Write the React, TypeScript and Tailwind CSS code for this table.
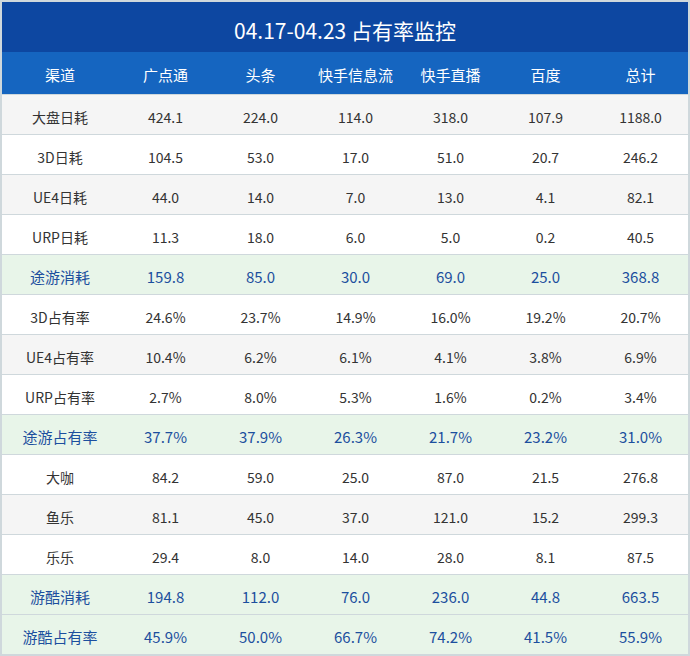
const columns = ['渠道', '广点通', '头条', '快手信息流', '快手直播', '百度', '总计'];

type Row = { name: string; values: string[]; total?: boolean };

const rows: Row[] = [
  { name: '大盘日耗', values: ['424.1', '224.0', '114.0', '318.0', '107.9', '1188.0'] },
  { name: '3D日耗', values: ['104.5', '53.0', '17.0', '51.0', '20.7', '246.2'] },
  { name: 'UE4日耗', values: ['44.0', '14.0', '7.0', '13.0', '4.1', '82.1'] },
  { name: 'URP日耗', values: ['11.3', '18.0', '6.0', '5.0', '0.2', '40.5'] },
  { name: '途游消耗', values: ['159.8', '85.0', '30.0', '69.0', '25.0', '368.8'], total: true },
  { name: '3D占有率', values: ['24.6%', '23.7%', '14.9%', '16.0%', '19.2%', '20.7%'] },
  { name: 'UE4占有率', values: ['10.4%', '6.2%', '6.1%', '4.1%', '3.8%', '6.9%'] },
  { name: 'URP占有率', values: ['2.7%', '8.0%', '5.3%', '1.6%', '0.2%', '3.4%'] },
  { name: '途游占有率', values: ['37.7%', '37.9%', '26.3%', '21.7%', '23.2%', '31.0%'], total: true },
  { name: '大咖', values: ['84.2', '59.0', '25.0', '87.0', '21.5', '276.8'] },
  { name: '鱼乐', values: ['81.1', '45.0', '37.0', '121.0', '15.2', '299.3'] },
  { name: '乐乐', values: ['29.4', '8.0', '14.0', '28.0', '8.1', '87.5'] },
  { name: '游酷消耗', values: ['194.8', '112.0', '76.0', '236.0', '44.8', '663.5'], total: true },
  { name: '游酷占有率', values: ['45.9%', '50.0%', '66.7%', '74.2%', '41.5%', '55.9%'], total: true },
];

export default function App() {
  return (
    <div
      className="w-[690px] h-[656px] border-2 border-[#cfd8dc] bg-white"
      style={{ fontFamily: '"Noto Sans CJK SC", "Noto Sans", sans-serif' }}
    >
      <div className="h-[50px] pt-[7px] bg-[#0d47a1] flex items-center justify-center text-white text-[21px]">
        04.17-04.23 占有率监控
      </div>
      <div className="h-[42px] pt-[5px] bg-[#1565c0] grid grid-cols-[116px_repeat(6,1fr)] text-white text-[15px]">
        {columns.map((c) => (
          <div key={c} className="flex items-center justify-center">
            {c}
          </div>
        ))}
      </div>
      {rows.map((row, i) => {
        const bg = row.total ? 'bg-[#e8f5e9]' : i % 2 === 0 ? 'bg-[#f5f5f5]' : 'bg-white';
        const text = row.total ? 'text-[#1c4f9e] text-[15px]' : 'text-[#333333] text-[14px]';
        return (
          <div
            key={row.name}
            className={`h-[40px] pt-[5px] border-t border-[#cfd8dc] grid grid-cols-[116px_repeat(6,1fr)] ${bg} ${text}`}
          >
            <div className="flex items-center justify-center">{row.name}</div>
            {row.values.map((v, j) => (
              <div key={j} className="flex items-center justify-center">
                {v}
              </div>
            ))}
          </div>
        );
      })}
    </div>
  );
}
